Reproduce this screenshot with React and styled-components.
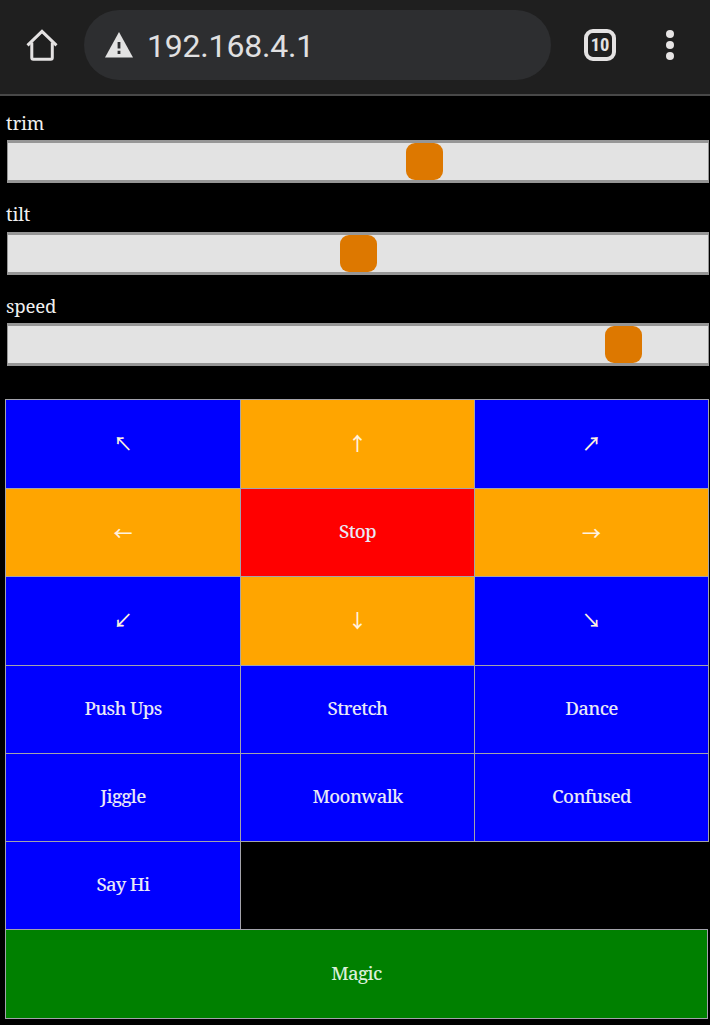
import React from 'react';
import styled, { createGlobalStyle } from 'styled-components';

const GlobalStyle = createGlobalStyle`
  * { box-sizing: border-box; }
  html, body { margin: 0; padding: 0; background: #000; overflow: hidden; }
`;

const serif = `'Noto Serif', 'DejaVu Serif Condensed', 'DejaVu Serif', serif`;

const Page = styled.div`
  width: 710px;
  height: 1025px;
  background: #000;
  overflow: hidden;
  font-family: ${serif};
`;

const BrowserBar = styled.header`
  display: flex;
  align-items: center;
  height: 96px;
  padding: 0 32px 4px 26px;
  background: #1f1f1f;
  border-bottom: 2px solid #484848;
`;

const Address = styled.div`
  display: flex;
  align-items: center;
  width: 467px;
  height: 70px;
  margin-left: 26px;
  padding-left: 21px;
  border-radius: 35px;
  background: #2d2e30;
`;

const Url = styled.span`
  margin-left: 14px;
  padding-top: 1px;
  font: 400 32px/70px Roboto, sans-serif;
  letter-spacing: -0.2px;
  color: #e0e0e1;
`;

const TabCount = styled.div`
  display: flex;
  align-items: center;
  justify-content: center;
  width: 32px;
  height: 32px;
  margin-left: 33px;
  border: 4px solid #e4e2e2;
  border-radius: 9px;
  color: #e4e2e2;
  font: 700 18.5px/24px Roboto, sans-serif;
  font-stretch: 80%;
`;

const MenuDots = styled.div`
  display: flex;
  flex-direction: column;
  gap: 2.7px;
  margin-left: 50px;
`;

const Dot = styled.i`
  width: 8px;
  height: 8px;
  border-radius: 50%;
  background: #e6e4e4;
`;

const Controls = styled.main`
  padding: 14px 0 0 5px;
`;

const Field = styled.label`
  display: block;
  height: ${(p) => p.$height}px;
  color: #f0f0f0;
`;

const FieldName = styled.span`
  display: block;
  height: 30px;
  padding-left: 1px;
  font-size: 18.6px;
  line-height: ${(p) => p.$line}px;
  letter-spacing: -0.15px;
`;

const Slider = styled.input`
  appearance: none;
  display: block;
  width: 702px;
  height: 43px;
  margin: 0 0 0 2px;
  border: solid #969696;
  border-width: 3px 1px;
  background: #e3e3e3;
  outline: none;

  &::-webkit-slider-thumb {
    appearance: none;
    width: 37px;
    height: 37px;
    border: 0;
    border-radius: 9px;
    background: #dd7800;
  }
`;

const Pad = styled.div`
  display: grid;
  grid-template-columns: 235px 234px 235px;
  grid-template-rows: 89px 88px 89px 88px 88px 88px 90px;
  width: 704px;
  margin-top: -1px;
`;

const Key = styled.button`
  display: flex;
  align-items: center;
  justify-content: center;
  margin: ${(p) => (p.$wide ? '0 1px 0 0' : p.$last ? '0 0 -1px 0' : '0 -1px -1px 0')};
  grid-column: ${(p) => (p.$wide ? '1 / -1' : 'auto')};
  padding: 0 0 ${(p) => (p.$level ? 0 : 3)}px;
  border: 1px solid #a3a3ac;
  background: ${(p) => p.$color};
  color: ${(p) => (p.$wide ? '#d9f0d9' : '#e9e9f6')};
  font-family: ${serif};
  font-size: 18.6px;
  font-weight: 500;
  line-height: 24px;
  letter-spacing: -0.65px;
`;

const Arrow = styled.span`
  font-family: 'Noto Sans CJK JP', sans-serif;
  font-size: 19px;
  font-weight: 500;
  letter-spacing: 0;
  color: #fff3e0;
`;

const HomeIcon = () => (
  <svg width="32" height="34" viewBox="0 0 32 34" fill="none" stroke="#e4e2e2" strokeWidth="3">
    <path d="M1.5 17.3 16 3.4 30.5 17.3" />
    <path d="M5.8 14.5V29.7a1.5 1.5 0 0 0 1.5 1.5H24.8a1.5 1.5 0 0 0 1.5-1.5V14.5" />
  </svg>
);

const WarningIcon = () => (
  <svg width="28" height="26" viewBox="0 0 28 26">
    <path d="M14 0 28 25.5H0Z" fill="#e2e2e2" />
    <path d="M14 10v6.5M14 18.8v3.2" stroke="#2d2e30" strokeWidth="2.8" />
  </svg>
);

const fields = [
  { name: 'trim', value: 60, height: 92, line: 26 },
  { name: 'tilt', value: 50, height: 91, line: 24 },
  { name: 'speed', value: 90, height: 107, line: 26 },
];

const keys = [
  { label: '↖', color: '#0000ff', arrow: true },
  { label: '↑', color: '#ffa500', arrow: true },
  { label: '↗', color: '#0000ff', arrow: true, last: true },
  { label: '←', color: '#ffa500', arrow: true, level: true },
  { label: 'Stop', color: '#ff0000' },
  { label: '→', color: '#ffa500', arrow: true, last: true, level: true },
  { label: '↙', color: '#0000ff', arrow: true },
  { label: '↓', color: '#ffa500', arrow: true },
  { label: '↘', color: '#0000ff', arrow: true, last: true },
  { label: 'Push Ups', color: '#0000ff' },
  { label: 'Stretch', color: '#0000ff' },
  { label: 'Dance', color: '#0000ff', last: true },
  { label: 'Jiggle', color: '#0000ff' },
  { label: 'Moonwalk', color: '#0000ff' },
  { label: 'Confused', color: '#0000ff', last: true },
  { label: 'Say Hi', color: '#0000ff' },
  { label: 'Magic', color: '#008000', wide: true },
];

export default function App() {
  return (
    <Page>
      <GlobalStyle />
      <BrowserBar>
        <HomeIcon />
        <Address>
          <WarningIcon />
          <Url>192.168.4.1</Url>
        </Address>
        <TabCount>10</TabCount>
        <MenuDots><Dot /><Dot /><Dot /></MenuDots>
      </BrowserBar>
      <Controls>
        {fields.map((f) => (
          <Field key={f.name} $height={f.height}>
            <FieldName $line={f.line}>{f.name}</FieldName>
            <Slider type="range" min="0" max="100" defaultValue={f.value} />
          </Field>
        ))}
        <Pad>
          {keys.map((k) => (
            <Key key={k.label} $color={k.color} $last={k.last} $wide={k.wide} $level={k.level}>
              {k.arrow ? <Arrow>{k.label}</Arrow> : k.label}
            </Key>
          ))}
        </Pad>
      </Controls>
    </Page>
  );
}
